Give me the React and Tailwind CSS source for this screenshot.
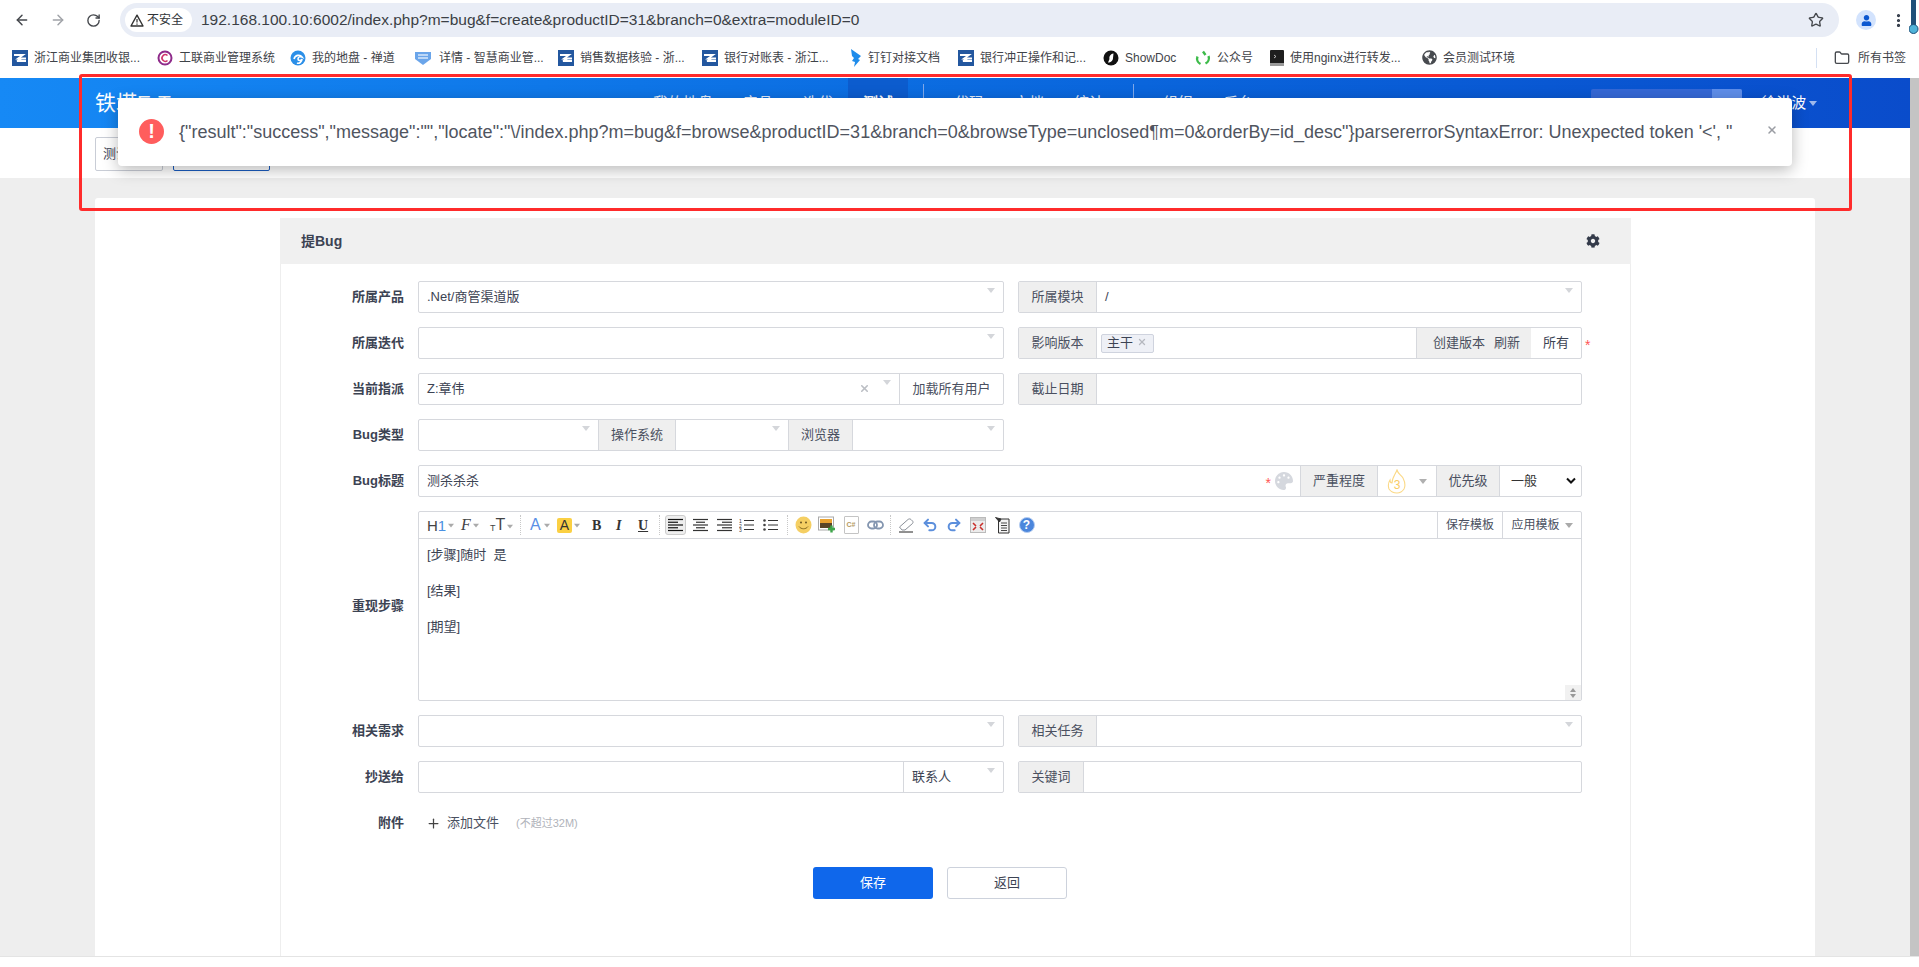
import { ArrowLeft, ArrowRight, RotateCw, Star, EllipsisVertical, Folder, X, Plus, Undo2, Redo2 } from 'lucide-react';
import { FaCog, FaPalette, FaUser, FaGlobeAmericas } from 'react-icons/fa';

const FONT = '"Liberation Sans", "Noto Sans CJK SC", sans-serif';

// Blue square logo used by several bookmarks
const ZLogo = () => (
  <svg width="16" height="16" viewBox="0 0 16 16">
    <rect width="16" height="16" fill="#23579f" />
    <path d="M2 5h9L6 8.500h8M14 11H5l5-2.500" fill="none" stroke="#fff" strokeWidth="1.800" />
  </svg>
);

const RingLogo = () => (
  <svg width="16" height="16" viewBox="0 0 16 16">
    <circle cx="8" cy="8" r="6.500" fill="none" stroke="#8e2a8a" strokeWidth="2" />
    <path d="M10.500 5.500a3.300 3.300 0 1 0 0 5" fill="none" stroke="#d0336b" strokeWidth="1.600" />
  </svg>
);

const SwirlLogo = () => (
  <svg width="16" height="16" viewBox="0 0 16 16">
    <circle cx="8" cy="8" r="7.500" fill="#2b8fe8" />
    <path d="M4 9c1-4 6-5 8-2-2-1-4 0-4 2s3 2 4 0c0 3-3 5-5 4" fill="none" stroke="#fff" strokeWidth="1.600" />
  </svg>
);

const CloudLogo = () => (
  <svg width="20" height="16" viewBox="0 0 20 16">
    <path d="M2 2h16v7l-8 6-8-6z" fill="#6aa5ea" />
    <path d="M5 5h10M5 8h10" stroke="#d8e8fb" strokeWidth="1.500" />
  </svg>
);

const DingLogo = () => (
  <svg width="12" height="18" viewBox="0 0 12 18">
    <path d="M1 0l10 7-3 3 2 1-6 7 1-5-3-1 2-3-2-2z" fill="#1f8ceb" />
  </svg>
);

const ShowDocLogo = () => (
  <svg width="16" height="16" viewBox="0 0 16 16">
    <circle cx="8" cy="8" r="7.500" fill="#111" />
    <path d="M10.500 3.500C7 4 6 7 6.500 9L5 12.500c3 0 5-2 5-4.500z" fill="#fff" />
  </svg>
);

const WechatLogo = () => (
  <svg width="16" height="16" viewBox="0 0 16 16">
    <path d="M8 1.500l2.500 3.500M13.500 6a6 6 0 0 1-3 7.500M5.500 14A6 6 0 0 1 2.500 6.500" fill="none" stroke="#3dbb4a" strokeWidth="2.400" />
  </svg>
);

const TermLogo = () => (
  <svg width="14" height="16" viewBox="0 0 14 16">
    <rect width="14" height="16" rx="1" fill="#1e1e1e" />
    <rect y="13" width="14" height="3" fill="#9a9a9a" />
    <path d="M4 5l2 1.500-2 1.500" fill="none" stroke="#ddd" strokeWidth="0.800" />
  </svg>
);

const bookmarks = [
  { icon: <ZLogo />, text: '浙江商业集团收银...', w: 'w-[145px]' },
  { icon: <RingLogo />, text: '工联商业管理系统', w: 'w-[133px]' },
  { icon: <SwirlLogo />, text: '我的地盘 - 禅道', w: 'w-[123px]' },
  { icon: <CloudLogo />, text: '详情 - 智慧商业管...', w: 'w-[145px]' },
  { icon: <ZLogo />, text: '销售数据核验 - 浙...', w: 'w-[144px]' },
  { icon: <ZLogo />, text: '银行对账表 - 浙江...', w: 'w-[148px]' },
  { icon: <DingLogo />, text: '钉钉对接文档', w: 'w-[108px]' },
  { icon: <ZLogo />, text: '银行冲正操作和记...', w: 'w-[145px]' },
  { icon: <ShowDocLogo />, text: 'ShowDoc', w: 'w-[92px]' },
  { icon: <WechatLogo />, text: '公众号', w: 'w-[75px]' },
  { icon: <TermLogo />, text: '使用nginx进行转发...', w: 'w-[152px]' },
  { icon: <FaGlobeAmericas size={15} color="#474a4f" />, text: '会员测试环境', w: 'w-[394px]' },
];

const Caret = ({ className = 'border-t-[#d4d6da]' }) => (
  <span className={`inline-block w-0 h-0 border-x-[4px] border-t-[5px] border-x-transparent ${className}`} />
);

// Chosen-style dropdown arrow, sits high in the box
const SelectCaret = () => (
  <span className="absolute right-[8px] top-[6px] flex">
    <Caret />
  </span>
);

const Addon = ({ children, className = 'w-[78px]' }) => (
  <div className={`h-full flex items-center justify-center bg-[#efefef] border-x border-[#d6d8dd] first:border-l-0 text-[#4a5060] shrink-0 ${className}`}>
    {children}
  </div>
);

const Cell = ({ children, caret, className = 'flex-1' }) => (
  <div className={`relative h-full flex items-center pl-[8px] min-w-0 ${className}`}>
    {children}
    {caret && <SelectCaret />}
  </div>
);

const Group = ({ children, className = 'w-[586px]' }) => (
  <div className={`h-8 flex border border-[#d6d8dd] rounded-[2px] bg-white shrink-0 ${className}`}>{children}</div>
);

const Row = ({ label, children }) => (
  <div className="flex items-center">
    <div className="w-[123px] text-right font-bold text-[#3c4353] mr-[14px] shrink-0">{label}</div>
    <div className="flex gap-[14px]">{children}</div>
  </div>
);

const Sep = ({ className = 'mx-[5px]' }) => <span className={`w-0 h-[20px] border-l border-dotted border-[#c8c8c8] ${className}`} />;

const Lines = ({ rows, color = '#222' }) => (
  <svg width="15" height="14" viewBox="0 0 15 14">
    {rows.map(([x1, x2], i) => (
      <path key={i} d={`M${x1} ${1.5 + i * 2.75}H${x2}`} stroke={color} strokeWidth="1.200" />
    ))}
  </svg>
);

const Smiley = () => (
  <svg width="17" height="18" viewBox="0 0 17 18">
    <ellipse cx="8.500" cy="9" rx="8" ry="8.500" fill="#f5cf63" />
    <circle cx="6" cy="6.500" r="1" fill="#6b5520" />
    <circle cx="11" cy="6.500" r="1" fill="#6b5520" />
    <path d="M4 10.500c2 3 7 3 9 0" fill="none" stroke="#8a6d20" strokeWidth="1" />
  </svg>
);

const ImageAdd = () => (
  <svg width="18" height="18" viewBox="0 0 18 18">
    <rect x="0.500" y="1" width="15" height="13" fill="#fff" stroke="#aaa" />
    <rect x="2" y="3" width="12" height="4" fill="#e9a230" />
    <rect x="2" y="7" width="12" height="5" fill="#5a4526" />
    <path d="M13.500 9.500v7M10 13h7" stroke="#3ea64a" strokeWidth="2.400" />
  </svg>
);

const LinkIcon = () => (
  <svg width="17" height="10" viewBox="0 0 17 10">
    <rect x="1" y="1.500" width="9" height="7" rx="3.500" fill="none" stroke="#8496b0" strokeWidth="1.800" />
    <rect x="7" y="1.500" width="9" height="7" rx="3.500" fill="none" stroke="#8496b0" strokeWidth="1.800" />
  </svg>
);

const Eraser = () => (
  <svg width="17" height="16" viewBox="0 0 17 16">
    <path d="M1.500 10L10 2.500c1-.8 2-.8 3 0l1.500 1.500c.7.8.7 1.500 0 2.500L7 13H4z" fill="#fff" stroke="#8a8f98" />
    <path d="M1 15h14" stroke="#222" strokeWidth="1" />
  </svg>
);

const FullScreen = () => (
  <svg width="16" height="16" viewBox="0 0 16 16">
    <rect x="0.500" y="0.500" width="15" height="15" fill="#ececec" stroke="#bbb" />
    <rect x="1" y="1" width="14" height="3" fill="#cfcfcf" />
    <path d="M3 6l3 3M3 13l3-3M13 6l-3 3M13 13l-3-3" stroke="#c9302c" strokeWidth="1.600" />
  </svg>
);

const ClipboardIcon = () => (
  <svg width="16" height="18" viewBox="0 0 16 18">
    <path d="M3.500 3H14v14H3.500z" fill="#f4f4f4" stroke="#333" />
    <path d="M0.500 1.500L6 3l-1.500 3zM6 7h6M6 9.500h6M6 12h6M6 14.500h6" fill="#333" stroke="#333" strokeWidth="0.900" />
  </svg>
);

const HelpIcon = () => (
  <div className="w-[16px] h-[16px] rounded-full bg-[#4b86dc] border border-[#b6cdf0] flex items-center justify-center text-white text-[12px] font-bold leading-none">?</div>
);

const Flame = () => (
  <svg width="20" height="25" viewBox="0 0 20 25">
    <path d="M10 1c1 4 4 5 6 8 2 4 3 7 1 11-2 3-5 4-7 4s-6-1-8-4c-1-3-1-6 1-9 0 2 1 3 2 3 0-5 3-8 5-13z" fill="none" stroke="#fbd986" strokeWidth="1.100" />
    <text x="10" y="20" textAnchor="middle" fontSize="12" fill="#f9cc63">3</text>
  </svg>
);

const toolCell = 'flex items-center justify-center shrink-0';

export default function App() {
  return (
    <div className="relative w-[1919px] h-[967px] overflow-hidden bg-white text-[13px] text-[#3c4353]" style={{ fontFamily: FONT }}>
      {/* Browser toolbar */}
      <div className="h-[37px] flex items-start">
        <div className="flex items-center h-[37px] pl-[14px] gap-[20px] w-[120px] text-[#44474c] pt-[3px]">
          <ArrowLeft size={16} strokeWidth={2.2} />
          <ArrowRight size={16} strokeWidth={2.2} className="text-[#a0a3a8]" />
          <RotateCw size={15} strokeWidth={2.2} />
        </div>
        <div className="mt-[3px] w-[1719px] h-[34px] rounded-full bg-[#e9edf6] flex items-center pl-[5px] pr-[15px] shrink-0">
          <div className="w-[67px] h-[24px] rounded-full bg-white flex items-center pl-[5px] gap-[3px] text-[12px] text-[#2f3337] shrink-0">
            <svg width="14" height="13" viewBox="0 0 14 13">
              <path d="M7 1.200L13 12H1z" fill="none" stroke="#333" strokeWidth="1.400" strokeLinejoin="round" />
              <path d="M7 5v3.500M7 9.500v1.200" stroke="#333" strokeWidth="1.200" />
            </svg>
            <span>不安全</span>
          </div>
          <span className="ml-[9px] text-[15.5px] text-[#3b3f45] whitespace-nowrap">192.168.100.10:6002/index.php?m=bug&amp;f=create&amp;productID=31&amp;branch=0&amp;extra=moduleID=0</span>
          <Star size={16} strokeWidth={2} className="ml-auto text-[#44474c]" />
        </div>
        <div className="flex items-center h-[37px] pt-[3px] pl-[17px]">
          <div className="w-[20px] h-[20px] rounded-full bg-[#d3e3fd] flex items-center justify-center">
            <FaUser size={11} color="#0b57d0" />
          </div>
          <EllipsisVertical size={17} strokeWidth={2.5} className="ml-[14px] text-[#2b3442]" />
        </div>
      </div>

      {/* Bookmarks bar */}
      <div className="h-[41px] flex items-center pl-[12px] text-[12px] text-[#3f4349]">
        {bookmarks.map((b, i) => (
          <div key={i} className={`flex items-center gap-[6px] whitespace-nowrap shrink-0 ${b.w}`}>
            {b.icon}
            <span>{b.text}</span>
          </div>
        ))}
        <div className="h-[20px] border-l border-[#d4e0f3]" />
        <Folder size={16} strokeWidth={2} className="ml-[17px] text-[#474a4f]" />
        <span className="ml-[8px] whitespace-nowrap">所有书签</span>
      </div>

      {/* Page */}
      <div className="flex h-[879px] border-b border-[#e4e4e4]">
        <div className="w-[1910px] flex flex-col">
          <header className="h-[50px] shrink-0 flex items-center text-white bg-gradient-to-r from-[#1689f5] to-[#0a4ccb]">
            <div className="ml-[95px] w-[543px] text-[21px] whitespace-nowrap">铁塔E-T</div>
            <nav className="flex items-stretch h-full text-[15px] text-[#e4edfb]">
              <a className="px-[15px] flex items-center">我的地盘</a>
              <a className="px-[15px] flex items-center">产品</a>
              <a className="px-[15px] flex items-center">迭代</a>
              <a className="px-[15px] flex items-center bg-[#0c5cce] text-white font-bold">测试</a>
              <span className="w-px h-[20px] bg-[#7ea8ea] mx-[15px] mt-[6px]" />
              <a className="px-[15px] flex items-center">代码</a>
              <a className="px-[15px] flex items-center">文档</a>
              <a className="px-[15px] flex items-center">统计</a>
              <span className="w-px h-[20px] bg-[#7ea8ea] mx-[14px] mt-[6px]" />
              <a className="px-[15px] flex items-center">组织</a>
              <a className="px-[15px] flex items-center">后台</a>
            </nav>
            <div className="ml-[323px] w-[151px] h-[28px] flex bg-[#3568d6] rounded-[2px]">
              <div className="ml-auto w-[30px] bg-[#5f8eea] rounded-r-[2px]" />
            </div>
            <span className="ml-[19px] text-[15px] whitespace-nowrap">徐洪波</span>
            <span className="ml-[3px] flex"><Caret className="border-t-[#9fb9ec]" /></span>
          </header>

          <div className="h-[50px] shrink-0 bg-white flex items-center pl-[95px] gap-[10px] pt-[2px]">
            <div className="w-[68px] h-[34px] border border-[#c9cdd6] rounded-[2px] flex items-center pl-[7px] text-[#3c4353]">测试</div>
            <div className="w-[97px] h-[34px] border border-[#1a5cc0] rounded-[2px] flex items-center justify-center">提Bug</div>
          </div>

          <div className="flex-1 bg-[#eeeeee] pt-[20px] pl-[95px] min-h-0">
            <div className="w-[1720px] h-full bg-white rounded-t-[3px] pt-[20px] pl-[185px]">
              <div className="w-[1351px] h-full border-x border-[#eeeeee]">
                <div className="h-[46px] bg-[#f0f0f0] flex items-center justify-between pl-[21px] pr-[31px] -mx-px">
                  <span className="font-bold text-[14px] text-[#3c4353]">提Bug</span>
                  <FaCog size={14} color="#343b4a" />
                </div>

                <div className="pt-[17px] flex flex-col gap-[14px]">
                  <Row label="所属产品">
                    <Group><Cell caret>.Net/商管渠道版</Cell></Group>
                    <Group className="w-[564px]">
                      <Addon>所属模块</Addon>
                      <Cell caret>/</Cell>
                    </Group>
                  </Row>

                  <Row label="所属迭代">
                    <Group><Cell caret /></Group>
                    <Group className="w-[564px]">
                      <Addon>影响版本</Addon>
                      <div className="flex-1 flex items-center pl-[4px]">
                        <span className="w-[53px] h-[19px] rounded-[2px] bg-[#eef0f6] border border-[#cfd3de] flex items-center pl-[5px] gap-[4px] text-[13px]">
                          主干 <X size={10} strokeWidth={3} className="text-[#b5b8bf] -mt-[3px]" />
                        </span>
                      </div>
                      <div className="w-[115px] h-full bg-[#efefef] border-l border-[#d6d8dd] flex items-center pl-[16px] gap-[9px] text-[#4a5060] whitespace-nowrap shrink-0">
                        <span>创建版本</span><span>刷新</span>
                      </div>
                      <div className="w-[50px] h-full flex items-center justify-center shrink-0 relative">
                        所有
                        <span className="absolute left-[54px] top-[7px] text-[#f55] text-[14px]">*</span>
                      </div>
                    </Group>
                  </Row>

                  <Row label="当前指派">
                    <Group>
                      <Cell caret className="flex-1">
                        Z:章伟
                        <X size={11} strokeWidth={3.5} className="absolute right-[29px] top-[9px] text-[#bbbec4]" />
                      </Cell>
                      <div className="w-[104px] h-full border-l border-[#d6d8dd] flex items-center justify-center shrink-0 text-[#4a5060]">加载所有用户</div>
                    </Group>
                    <Group className="w-[564px]">
                      <Addon>截止日期</Addon>
                      <Cell />
                    </Group>
                  </Row>

                  <Row label="Bug类型">
                    <Group>
                      <Cell caret className="w-[179px]" />
                      <Addon>操作系统</Addon>
                      <Cell caret className="w-[112px]" />
                      <Addon className="w-[65px]">浏览器</Addon>
                      <Cell caret className="flex-1" />
                    </Group>
                  </Row>

                  <Row label="Bug标题">
                    <Group className="w-[1164px]">
                      <Cell className="flex-1">
                        测杀杀杀
                        <span className="absolute right-[29px] top-[7px] text-[#f55] text-[14px]">*</span>
                        <FaPalette size={18} color="#d5d8de" className="absolute right-[7px] top-[6px]" />
                      </Cell>
                      <Addon className="w-[78px]">严重程度</Addon>
                      <div className="w-[58px] h-full flex items-center pl-[9px] gap-[12px] shrink-0">
                        <Flame />
                        <Caret className="border-t-[#b0b0b0]" />
                      </div>
                      <Addon className="w-[64px]">优先级</Addon>
                      <div className="w-[81px] h-full flex items-center pl-[11px] pr-[5px] justify-between text-[#333] shrink-0">
                        一般
                        <svg width="10" height="8" viewBox="0 0 10 8">
                          <path d="M1 1.500l4 4 4-4" fill="none" stroke="#111" strokeWidth="2" />
                        </svg>
                      </div>
                    </Group>
                  </Row>

                  <Row label="重现步骤">
                    <div className="w-[1164px] h-[190px] border border-[#d6d8dd] rounded-[2px] flex flex-col relative">
                      <div className="h-[27px] border-b border-[#d6d8dd] flex items-center shrink-0 pl-[8px] text-[#444]">
                        <div className="flex items-center w-[34px] text-[15px] leading-none">H<span className="text-[#4a90e2]">1</span><span className="ml-[1px] flex"><Caret className="border-t-[#aaa] scale-75" /></span></div>
                        <div className="flex items-center w-[29px] text-[16px] leading-none" style={{ fontFamily: '"Liberation Serif", serif' }}><span className="italic">F</span><span className="ml-[1px] flex"><Caret className="border-t-[#aaa] scale-75" /></span></div>
                        <div className="flex items-end w-[25px] leading-none"><span className="text-[9px]">T</span><span className="text-[16px]">T</span><span className="ml-[1px] mb-[4px] flex"><Caret className="border-t-[#aaa] scale-75" /></span></div>
                        <Sep />
                        <div className="flex items-center w-[29px] pl-[4px] text-[16px] text-[#5a8fe6] leading-none">A<span className="ml-[2px] flex"><Caret className="border-t-[#aaa] scale-75" /></span></div>
                        <div className="w-[15px] h-[15px] rounded-[2px] bg-[#fbd043] ml-[2px] flex items-center justify-center text-[14px] leading-none text-[#333]">A</div>
                        <span className="ml-[1px] mr-[9px] flex"><Caret className="border-t-[#aaa] scale-75" /></span>
                        <div className="w-[24px] font-bold text-[14px] text-[#333] pl-[2px]" style={{ fontFamily: '"Liberation Serif", serif' }}>B</div>
                        <div className="w-[24px] italic font-bold text-[14px] text-[#333] pl-[2px]" style={{ fontFamily: '"Liberation Serif", serif' }}>I</div>
                        <div className="w-[16px] underline font-bold text-[14px] text-[#333]" style={{ fontFamily: '"Liberation Serif", serif' }}>U</div>
                        <Sep />
                        <div className={`w-[21px] h-[20px] bg-[#eee] border border-[#ccc] rounded-[3px] ${toolCell}`}>
                          <Lines rows={[[0, 15], [0, 10], [0, 15], [0, 10], [0, 15]]} color="#111" />
                        </div>
                        <div className={`w-[24px] ml-[2px] ${toolCell}`}><Lines rows={[[0, 15], [3, 12], [0, 15], [3, 12], [0, 15]]} color="#333" /></div>
                        <div className={`w-[24px] ${toolCell}`}><Lines rows={[[0, 15], [5, 15], [0, 15], [5, 15], [0, 15]]} color="#333" /></div>
                        <div className={`w-[21px] ${toolCell}`}>
                          <svg width="15" height="14" viewBox="0 0 15 14">
                            <text x="0" y="5" fontSize="5" fill="#333">1</text>
                            <text x="0" y="9.500" fontSize="5" fill="#333">2</text>
                            <text x="0" y="14" fontSize="5" fill="#333">3</text>
                            <path d="M5 2.500h10M5 7h10M5 11.500h10" stroke="#333" strokeWidth="1.200" />
                          </svg>
                        </div>
                        <div className={`w-[27px] ${toolCell}`}>
                          <svg width="15" height="14" viewBox="0 0 15 14">
                            <path d="M5 2.500h10M5 7h10M5 11.500h10" stroke="#333" strokeWidth="1.200" />
                            <circle cx="1.500" cy="2.500" r="1.300" fill="#444" />
                            <circle cx="1.500" cy="7" r="1.300" fill="#444" />
                            <circle cx="1.500" cy="11.500" r="1.300" fill="#444" />
                          </svg>
                        </div>
                        <Sep className="mx-[3px]" />
                        <div className={`w-[24px] ${toolCell}`}><Smiley /></div>
                        <div className={`w-[24px] ${toolCell}`}><ImageAdd /></div>
                        <div className={`w-[24px] ${toolCell}`}>
                          <div className="w-[15px] h-[18px] border border-[#c4c4c4] rounded-[1px] bg-white flex items-center justify-center text-[7px] font-bold text-[#b59a63]">C#</div>
                        </div>
                        <div className={`w-[24px] ${toolCell}`}><LinkIcon /></div>
                        <Sep className="mx-[3px]" />
                        <div className={`w-[24px] ${toolCell}`}><Eraser /></div>
                        <div className={`w-[24px] ${toolCell}`}><Undo2 size={16} strokeWidth={3} color="#5c8fdc" /></div>
                        <div className={`w-[24px] ${toolCell}`}><Redo2 size={16} strokeWidth={3} color="#5c8fdc" /></div>
                        <div className={`w-[24px] ${toolCell}`}><FullScreen /></div>
                        <div className={`w-[25px] ${toolCell}`}><ClipboardIcon /></div>
                        <div className={`w-[23px] ${toolCell}`}><HelpIcon /></div>
                        <div className="ml-auto h-full flex text-[12px] text-[#4a5060]">
                          <div className="w-[65px] h-full border-l border-[#d6d8dd] flex items-center justify-center">保存模板</div>
                          <div className="w-[79px] h-full border-l border-[#d6d8dd] flex items-center justify-center gap-[5px]">应用模板 <Caret className="border-t-[#aaa]" /></div>
                        </div>
                      </div>
                      <div className="flex-1 pt-[7px] pl-[8px] text-[13px] leading-[18px] text-[#3c4353]">
                        <p className="mb-[18px]">[步骤]随时&nbsp; 是</p>
                        <p className="mb-[18px]">[结果]</p>
                        <p>[期望]</p>
                      </div>
                      <div className="absolute right-0 bottom-0 w-[16px] h-[15px] bg-[#f1f1f1] flex flex-col items-center justify-center gap-[2px]">
                        <span className="w-0 h-0 border-x-[3px] border-b-[4px] border-x-transparent border-b-[#999]" />
                        <span className="w-0 h-0 border-x-[3px] border-t-[4px] border-x-transparent border-t-[#999]" />
                      </div>
                    </div>
                  </Row>

                  <Row label="相关需求">
                    <Group><Cell caret /></Group>
                    <Group className="w-[564px]">
                      <Addon>相关任务</Addon>
                      <Cell caret />
                    </Group>
                  </Row>

                  <Row label="抄送给">
                    <Group>
                      <Cell className="flex-1" />
                      <Cell caret className="w-[100px] flex-none border-l border-[#d6d8dd]">联系人</Cell>
                    </Group>
                    <Group className="w-[564px]">
                      <Addon className="w-[65px]">关键词</Addon>
                      <Cell />
                    </Group>
                  </Row>

                  <Row label="附件">
                    <div className="h-8 flex items-center pl-[8px] whitespace-nowrap">
                      <Plus size={15} strokeWidth={2} className="text-[#444]" />
                      <span className="ml-[6px] text-[#4a5060]">添加文件</span>
                      <span className="ml-[17px] text-[11px] text-[#b0b3ba]">(不超过32M)</span>
                    </div>
                  </Row>

                  <div className="flex gap-[14px] pl-[532px] mt-[14px]">
                    <button className="w-[120px] h-[32px] rounded-[3px] bg-[#0f67eb] text-white text-[13px]">保存</button>
                    <button className="w-[120px] h-[32px] rounded-[3px] bg-white border border-[#cdd2dc] text-[#3c4353] text-[13px]">返回</button>
                  </div>
                </div>
              </div>
            </div>
          </div>
        </div>
        <div className="w-[9px] bg-[#c4c4c4]" />
      </div>

      {/* Red highlight box drawn over the shot */}
      <div className="absolute left-[79px] top-[74px] w-[1773px] h-[137px] border-[3px] border-[#ff2b2b] rounded-[3px] pointer-events-none" />

      {/* Error toast */}
      <div className="absolute left-[118px] top-[98px] w-[1674px] h-[68px] bg-white rounded-[4px] shadow-[0_4px_16px_rgba(0,0,0,0.28)] flex items-center pl-[21px]">
        <div className="w-[25px] h-[25px] rounded-full bg-[#ff5d5d] flex items-center justify-center text-white font-bold text-[20px] leading-none shrink-0 -mt-[2px]">!</div>
        <span className="ml-[15px] text-[18px] text-[#50555f] whitespace-nowrap">{`{"result":"success","message":"","locate":"\\/index.php?m=bug&f=browse&productID=31&branch=0&browseType=unclosed¶m=0&orderBy=id_desc"}parsererrorSyntaxError: Unexpected token '<', "`}</span>
        <X size={12} strokeWidth={3} className="absolute right-[14px] top-[26px] text-[#9a9da3]" />
      </div>

      {/* Desktop widget poking in at the top right corner */}
      <svg className="absolute right-0 top-0" width="10" height="34" viewBox="0 0 10 34">
        <rect x="2" y="0" width="5" height="28" fill="#1f4f78" />
        <circle cx="4.500" cy="29" r="4.500" fill="#4fb3d9" stroke="#1f4f78" />
      </svg>
    </div>
  );
}
